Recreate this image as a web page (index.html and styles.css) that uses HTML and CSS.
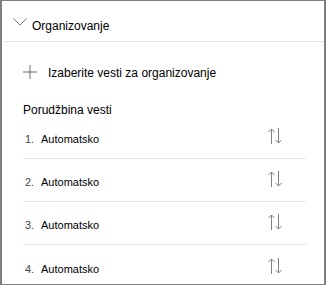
FILE: index.html
```html
<!DOCTYPE html>
<html>
<head>
<meta charset="utf-8">
<link rel="stylesheet" href="styles.css">
</head>
<body>
<div class="panel">
  <div class="header">
    <svg class="chevron" width="14" height="8" viewBox="0 0 14 8"><polyline points="0.5,0.5 7,7 13.5,0.5" fill="none" stroke="#7a7a7a" stroke-width="1"/></svg>
    <span class="title">Organizovanje</span>
  </div>
  <div class="content">
    <div class="add-row">
      <svg class="plus" width="14" height="14" viewBox="0 0 14 14"><path d="M7 0V14M0 7H14" stroke="#666" stroke-width="1"/></svg>
      <span class="add-text">Izaberite vesti za organizovanje</span>
    </div>
    <div class="label">Porudžbina vesti</div>
    <ul class="list">
      <li class="item"><span class="num">1.</span><span class="name">Automatsko</span><svg class="sort" width="16" height="16" viewBox="0 0 16 16"><path d="M4.5 1V16M1.5 4L4.5 1L7.5 4M11.5 0V15M8.5 12L11.5 15L14.5 12" fill="none" stroke="#808080" stroke-width="1"/></svg></li>
      <li class="item"><span class="num">2.</span><span class="name">Automatsko</span><svg class="sort" width="16" height="16" viewBox="0 0 16 16"><path d="M4.5 1V16M1.5 4L4.5 1L7.5 4M11.5 0V15M8.5 12L11.5 15L14.5 12" fill="none" stroke="#808080" stroke-width="1"/></svg></li>
      <li class="item"><span class="num">3.</span><span class="name">Automatsko</span><svg class="sort" width="16" height="16" viewBox="0 0 16 16"><path d="M4.5 1V16M1.5 4L4.5 1L7.5 4M11.5 0V15M8.5 12L11.5 15L14.5 12" fill="none" stroke="#808080" stroke-width="1"/></svg></li>
      <li class="item"><span class="num">4.</span><span class="name">Automatsko</span><svg class="sort" width="16" height="16" viewBox="0 0 16 16"><path d="M4.5 1V16M1.5 4L4.5 1L7.5 4M11.5 0V15M8.5 12L11.5 15L14.5 12" fill="none" stroke="#808080" stroke-width="1"/></svg></li>
    </ul>
  </div>
</div>
</body>
</html>
```
FILE: styles.css
```css
* { box-sizing: border-box; }
html, body { margin: 0; padding: 0; background: #fff; }
body { font-family: "Liberation Sans", Arial, sans-serif; color: #201f1e; }
.panel {
  width: 326px;
  height: 285px;
  border-style: solid;
  border-color: #7f7f7f;
  border-width: 1px 2px 1px 2px;
  overflow: hidden;
  background: #fff;
}
.header {
  height: 41px;
  margin-left: 2px;
  padding-left: 9px;
  display: flex;
  align-items: flex-start;
  border-bottom: 1px solid #e1e1e1;
}
.chevron { margin-top: 17px; margin-right: 5px; flex: none; }
.title { font-size: 12px; line-height: 16px; margin-top: 17px; color: #000; }
.content { padding: 0 18px 0 21px; }
.add-row {
  margin-top: 17px;
  height: 28px;
  display: flex;
  align-items: center;
}
.plus { flex: none; margin-right: 11px; margin-bottom: 2px; }
.add-text { font-size: 12px; color: #000; }
.label {
  margin-top: 17px;
  font-size: 12px;
  line-height: 12px;
  color: #000;
}
.list { list-style: none; margin: 0; padding: 0; }
.item {
  height: 43px;
  padding-top: 4px;
  padding-left: 2px;
  display: flex;
  align-items: center;
  border-bottom: 1px solid #e6e6e6;
}
.item:last-child { border-bottom: none; }
.num { width: 16px; font-size: 11px; color: #444; }
.name { font-size: 11px; color: #000; }
.sort { margin-left: auto; margin-right: 23px; margin-bottom: 6px; flex: none; }
```
